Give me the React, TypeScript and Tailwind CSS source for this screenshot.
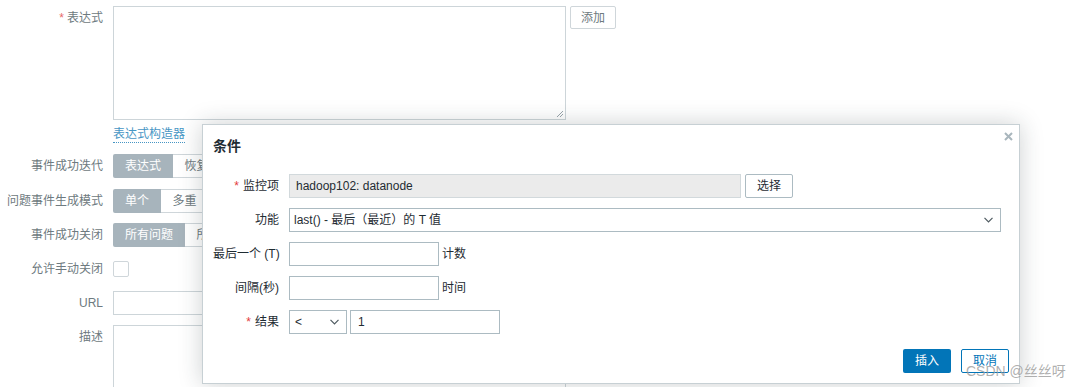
import React from 'react';

const font = "font-['Liberation_Sans','Noto_Sans_CJK_SC',sans-serif]";

function Chevron() {
  return (
    <svg width="9" height="6" viewBox="0 0 9 6" className="shrink-0">
      <polyline points="0.5,0.8 4.5,4.8 8.5,0.8" fill="none" stroke="#4f5b61" strokeWidth="1.2" />
    </svg>
  );
}

function BgRow({ label, children, required, className = '' }: { label: string; children: React.ReactNode; required?: boolean; className?: string }) {
  return (
    <div className={`flex items-center ${className}`}>
      <div className="w-[103px] text-right text-[#6e7a80] leading-[14px] shrink-0">
        {required && <span className="text-[#e76a6a] mr-[3px]">*</span>}
        {label}
      </div>
      <div className="ml-[10px] flex items-center">{children}</div>
    </div>
  );
}

// the part right of x=202 sits under the dialog, so only the visible part is kept
function Segmented({ items }: { items: { text: string; w: number }[] }) {
  return (
    <div className="flex h-[24px] w-[89px] overflow-hidden">
      {items.map((it, i) => (
        <div
          key={it.text}
          style={{ width: it.w }}
          className={
            i === 0
              ? 'shrink-0 flex items-center justify-center bg-[#a7b4bc] text-white rounded-l-[2px]'
              : 'shrink-0 flex items-center justify-center bg-white border border-l-0 border-[#cfd6da] text-[#6e7a80] whitespace-nowrap'
          }
        >
          {it.text}
        </div>
      ))}
    </div>
  );
}

function DlgRow({ label, required, children }: { label: string; required?: boolean; children: React.ReactNode }) {
  return (
    <div className="flex items-center h-[24px]">
      <div className="w-[66px] text-right shrink-0 whitespace-nowrap">
        {required && <span className="text-[#e33b3b] mr-[4px]">*</span>}
        {label}
      </div>
      <div className="ml-[10px] flex items-center">{children}</div>
    </div>
  );
}

export default function App() {
  return (
    <div className={`relative w-[1081px] h-[387px] overflow-hidden bg-white text-[12px] ${font}`}>
      {/* background form */}
      <div className="flex flex-col pt-[6px]">
        <div className="flex items-start">
          <div className="w-[103px] text-right text-[#6e7a80] leading-[14px] pt-[5px] shrink-0">
            <span className="text-[#e76a6a] mr-[3px]">*</span>表达式
          </div>
          <div className="ml-[10px] w-[453px] h-[114px] border border-[#cdd5d9] bg-white relative">
            <svg width="8" height="8" viewBox="0 0 8 8" className="absolute right-[1px] bottom-[1px]">
              <line x1="7" y1="1" x2="1" y2="7" stroke="#9aa5ab" />
              <line x1="7" y1="4" x2="4" y2="7" stroke="#9aa5ab" />
            </svg>
          </div>
          <button className="ml-[4px] w-[46px] h-[23px] border border-[#cfd6da] rounded-[2px] text-[#6e7a80] bg-white">添加</button>
        </div>

        <div className="ml-[113px] mt-[7px] leading-[14px]">
          <span className="text-[#4796c4] border-b border-dotted border-[#4796c4] pb-[1px]">表达式构造器</span>
        </div>

        <BgRow label="事件成功迭代" className="mt-[13px] h-[24px]">
          <Segmented items={[{ text: '表达式', w: 60 }, { text: '恢复表达式', w: 84 }]} />
        </BgRow>
        <BgRow label="问题事件生成模式" className="mt-[11px] h-[24px]">
          <Segmented items={[{ text: '单个', w: 48 }, { text: '多重', w: 48 }]} />
        </BgRow>
        <BgRow label="事件成功关闭" className="mt-[10px] h-[24px]">
          <Segmented items={[{ text: '所有问题', w: 72 }, { text: '所有问题', w: 72 }]} />
        </BgRow>
        <BgRow label="允许手动关闭" className="mt-[10px] h-[24px]">
          <div className="w-[16px] h-[16px] border border-[#cfd6da] rounded-[2px] bg-white" />
        </BgRow>
        <BgRow label="URL" className="mt-[10px] h-[24px]">
          <div className="w-[453px] h-[24px] border border-[#cdd5d9] bg-white" />
        </BgRow>
        <div className="flex items-start mt-[10px]">
          <div className="w-[103px] text-right text-[#6e7a80] leading-[14px] pt-[5px] shrink-0">描述</div>
          <div className="ml-[10px] w-[453px] h-[80px] border border-[#cdd5d9] bg-white" />
        </div>
      </div>

      {/* dialog */}
      <div className="absolute left-[202px] top-[124px] w-[818px] h-[260px] bg-white border border-[#c7d0d4] shadow-[0_0_22px_rgba(31,44,51,0.22)] flex flex-col text-[#1f2c33] px-[10px]">
        <svg width="9" height="9" viewBox="0 0 9 9" className="absolute right-[6px] top-[7px]">
          <path d="M1 1 L8 8 M8 1 L1 8" stroke="#a9b6bd" strokeWidth="2" />
        </svg>
        <div className="pt-[12px] text-[14px] font-bold leading-[18px]">条件</div>

        <div className="mt-[19px] flex flex-col gap-[10px]">
          <DlgRow label="监控项" required>
            <div className="w-[452px] h-[24px] bg-[#ebebeb] border border-[#d2d9dc] flex items-center px-[6px]">hadoop102: datanode</div>
            <button className="ml-[4px] w-[48px] h-[24px] border border-[#acbbc2] rounded-[2px] bg-white">选择</button>
          </DlgRow>
          <DlgRow label="功能">
            <div className="w-[712px] h-[24px] border border-[#acbbc2] flex items-center justify-between pl-[4px] pr-[7px]">
              <span>last() - 最后（最近）的 T 值</span>
              <Chevron />
            </div>
          </DlgRow>
          <DlgRow label="最后一个 (T)">
            <div className="w-[150px] h-[24px] border border-[#acbbc2]" />
            <span className="ml-[3px]">计数</span>
          </DlgRow>
          <DlgRow label="间隔(秒)">
            <div className="w-[150px] h-[24px] border border-[#acbbc2]" />
            <span className="ml-[3px]">时间</span>
          </DlgRow>
          <DlgRow label="结果" required>
            <div className="w-[58px] h-[24px] border border-[#acbbc2] flex items-center justify-between pl-[5px] pr-[7px]">
              <span>&lt;</span>
              <Chevron />
            </div>
            <div className="ml-[3px] w-[150px] h-[24px] border border-[#acbbc2] flex items-center px-[7px]">1</div>
          </DlgRow>
        </div>

        <div className="mt-auto mb-[10px] flex justify-end gap-[10px]">
          <button className="w-[48px] h-[24px] bg-[#0275b8] text-white rounded-[2px]">插入</button>
          <button className="w-[48px] h-[24px] border border-[#0275b8] text-[#0275b8] rounded-[2px] bg-white">取消</button>
        </div>
      </div>

      {/* watermark */}
      <div className="absolute left-[966px] top-[362px] text-[14px] leading-[18px] text-[#9a9a9a]/80 whitespace-nowrap">CSDN @丝丝呀</div>
    </div>
  );
}
